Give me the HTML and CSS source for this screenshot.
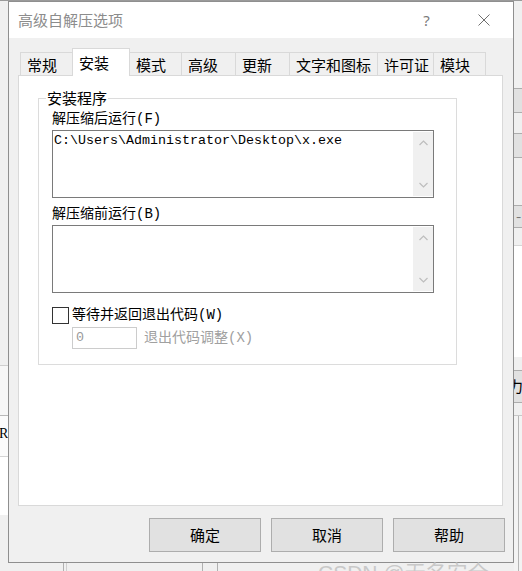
FILE: index.html
```html
<!DOCTYPE html>
<html lang="zh-CN">
<head>
<meta charset="utf-8">
<title>高级自解压选项</title>
<link rel="stylesheet" href="styles.css">
</head>
<body>
<div class="backdrop">
  <div class="bg-top"></div>
  <div class="bg-left">
    <div class="bl bl-a"></div>
    <div class="bl bl-b"><span class="frag">iR</span></div>
    <div class="bl bl-c"></div>
  </div>
  <div class="bg-right">
    <div class="br-block br-1"></div>
    <div class="br-block br-2"></div>
    <div class="br-block br-3">-</div>
    <div class="br-white br-4"></div>
    <div class="br-block br-5">力</div>
    <div class="br-white br-6"></div>
  </div>
  <div class="bg-bottom">
    <div class="bb-line bb-1"></div>
    <div class="bb-line bb-2"></div>
    <div class="bb-line bb-3"></div>
    <div class="bb-line bb-4"></div>
  </div>
</div>

<div class="dialog">
  <div class="titlebar">
    <span class="title">高级自解压选项</span>
    <span class="help">?</span>
    <svg class="close" width="12" height="12" viewBox="0 0 12 12"><path d="M0.5 0.5 L11.5 11.5 M11.5 0.5 L0.5 11.5" stroke="#6f6f6f" stroke-width="1" fill="none"/></svg>
  </div>
  <div class="body">
    <div class="tabs">
      <div class="tab w53 first">常规</div>
      <div class="tab w58 active">安装</div>
      <div class="tab w53">模式</div>
      <div class="tab w55">高级</div>
      <div class="tab w55">更新</div>
      <div class="tab w89">文字和图标</div>
      <div class="tab w57">许可证</div>
      <div class="tab w53 last">模块</div>
    </div>
    <div class="panel">
      <div class="group">
        <div class="group-title">安装程序</div>
        <div class="field-label first-label">解压缩后运行(F)</div>
        <div class="textbox">
          <div class="text">C:\Users\Administrator\Desktop\x.exe</div>
          <div class="scrollbar">
            <svg width="9" height="6" viewBox="0 0 9 6"><polyline points="0.5,5 4.5,1 8.5,5" fill="none" stroke="#bdbdbd" stroke-width="1.2"/></svg>
            <svg width="9" height="6" viewBox="0 0 9 6"><polyline points="0.5,1 4.5,5 8.5,1" fill="none" stroke="#bdbdbd" stroke-width="1.2"/></svg>
          </div>
        </div>
        <div class="field-label second-label">解压缩前运行(B)</div>
        <div class="textbox">
          <div class="text"></div>
          <div class="scrollbar">
            <svg width="9" height="6" viewBox="0 0 9 6"><polyline points="0.5,5 4.5,1 8.5,5" fill="none" stroke="#bdbdbd" stroke-width="1.2"/></svg>
            <svg width="9" height="6" viewBox="0 0 9 6"><polyline points="0.5,1 4.5,5 8.5,1" fill="none" stroke="#bdbdbd" stroke-width="1.2"/></svg>
          </div>
        </div>
        <div class="check-row">
          <span class="checkbox"></span>
          <span class="check-label">等待并返回退出代码(W)</span>
        </div>
        <div class="code-row">
          <div class="code-input">0</div>
          <span class="code-label">退出代码调整(X)</span>
        </div>
      </div>
    </div>
    <div class="buttons">
      <div class="btn">确定</div>
      <div class="btn">取消</div>
      <div class="btn">帮助</div>
    </div>
  </div>
</div>

<div class="watermark">CSDN @无名安全</div>
</body>
</html>
```

FILE: styles.css
```css
* { box-sizing: border-box; }
html, body { margin: 0; padding: 0; }
body {
  width: 522px;
  height: 571px;
  overflow: hidden;
  position: relative;
  background: #f0f0f0;
  font-family: "Noto Sans CJK SC", sans-serif;
  color: #000;
}

/* ---------- background application (behind the dialog) ---------- */
.backdrop { position: absolute; left: 0; top: 0; width: 522px; height: 571px; }
.bg-top { position: absolute; left: 0; top: 0; width: 522px; height: 1px; background: #9a9a9a; }
.bg-left { position: absolute; left: 0; top: 0; width: 8px; height: 571px; }
.bl { position: absolute; left: 0; width: 8px; }
.bl-a { top: 365px; height: 50px; border-top: 1px solid #cfcfcf; background: #f7f7f7; }
.bl-b { top: 415px; height: 42px; border-top: 1px solid #b9b9b9; border-bottom: 1px solid #d4d4d4; background: #fbfbfb; overflow: hidden; }
.bl-c { top: 457px; height: 58px; background: #fff; }
.frag { position: absolute; left: -5px; top: 10px; font-family: "Liberation Serif", serif; font-size: 14px; line-height: 16px; }
.bg-right { position: absolute; left: 514px; top: 0; width: 8px; height: 571px; }
.br-block, .br-white { position: absolute; left: 0; width: 8px; overflow: hidden; }
.br-block { background: #e1e1e1; border-top: 1px solid #adadad; border-bottom: 1px solid #adadad; font-size: 15px; line-height: 30px; text-indent: -6px; }
.br-1 { top: 88px; height: 25px; }
.br-2 { top: 133px; height: 25px; }
.br-3 { top: 205px; height: 23px; line-height: 20px; text-indent: 2px; color: #777; }
.br-4 { top: 245px; height: 112px; background: #fff; border-top: 1px solid #d6d6d6; }
.br-5 { top: 370px; height: 33px; }
.br-6 { top: 415px; height: 156px; background: #f3f3f3; border-top: 1px solid #c8c8c8; }
.br-6::after { content: ""; position: absolute; left: 4px; top: 0; width: 1px; height: 156px; background: #b5b5b5; }
.bg-bottom { position: absolute; left: 0; top: 563px; width: 522px; height: 8px; }
.bb-line { position: absolute; top: 0; width: 1px; height: 8px; background: #b0b0b0; }
.bb-1 { left: 63px; }
.bb-2 { left: 66px; background: #d0d0d0; }
.bb-3 { left: 202px; }
.bb-4 { left: 217px; }

.watermark {
  position: absolute;
  left: 318px;
  top: 561px;
  font-family: "Liberation Sans", "Noto Sans CJK SC", sans-serif;
  font-size: 21px;
  line-height: 24px;
  color: #c9c9c9;
  white-space: nowrap;
}

/* ---------- dialog window ---------- */
.dialog {
  position: absolute;
  left: 8px;
  top: 1px;
  width: 506px;
  height: 562px;
  border: 1px solid #8f8f8f;
  background: #f0f0f0;
  display: flex;
  flex-direction: column;
}

.titlebar {
  height: 36px;
  background: #fff;
  display: flex;
  align-items: center;
  padding-left: 9px;
  flex: none;
}
.title {
  flex: 1;
  font-size: 15px;
  line-height: 20px;
  color: #8c8c8c;
}
.help {
  width: 15px;
  text-align: center;
  font-family: "Noto Sans", sans-serif;
  font-size: 15px;
  line-height: 20px;
  color: #7a7a7a;
  margin-right: 44px;
}
.close { display: block; margin-right: 23px; }

.body {
  flex: 1;
  display: flex;
  flex-direction: column;
  padding-top: 10px;
}

/* ---------- tabs ---------- */
.tabs {
  display: flex;
  align-items: flex-end;
  height: 27px;
  margin-left: 11px;
  flex: none;
}
.tab {
  height: 23px;
  border: 1px solid #d9d9d9;
  border-bottom: none;
  margin-left: -1px;
  background: #f0f0f0;
  font-size: 15px;
  line-height: 22px;
  padding: 1px 0 0 6px;
  white-space: nowrap;
}
.tab.first { margin-left: 0; }
.tab.active {
  height: 28px;
  background: #fff;
  margin-bottom: -1px;
  padding-top: 3px;
  position: relative;
  z-index: 1;
}
.w53 { width: 53px; }
.w55 { width: 55px; }
.w57 { width: 57px; }
.w58 { width: 58px; }
.w89 { width: 89px; }

/* ---------- tab page ---------- */
.panel {
  margin-left: 9px;
  width: 485px;
  height: 431px;
  border: 1px solid #d9d9d9;
  background: #fff;
  flex: none;
  padding-top: 22px;
}
.group {
  margin-left: 19px;
  width: 419px;
  border: 1px solid #dcdcdc;
  padding: 0 13px 15px 13px;
}
.group-title {
  width: fit-content;
  margin: -9px 0 0 -6px;
  padding: 0 1px;
  background: #fff;
  font-size: 15px;
  line-height: 16px;
}
.field-label {
  font-family: "Liberation Mono", "Noto Sans CJK SC", monospace;
  font-size: 14px;
  line-height: 18px;
  margin-bottom: 2px;
  white-space: nowrap;
}
.first-label { margin-top: 4px; }
.second-label { margin-top: 7px; }

.textbox {
  width: 382px;
  height: 68px;
  border: 1px solid #7a7a7a;
  display: flex;
  background: #fff;
}
.text {
  flex: 1;
  padding: 2px 0 0 1px;
  font-family: "Liberation Mono", monospace;
  font-size: 13.33px;
  line-height: 16px;
  white-space: nowrap;
}
.scrollbar {
  width: 20px;
  margin: 1px 0;
  background: #f0f0f0;
  display: flex;
  flex-direction: column;
  align-items: center;
  justify-content: space-between;
  padding: 8px 0 8px;
}
.scrollbar svg { display: block; }

.check-row {
  display: flex;
  align-items: center;
  height: 18px;
  margin-top: 13px;
}
.checkbox {
  width: 17px;
  height: 17px;
  border: 1px solid #333;
  background: #fff;
  margin-right: 3px;
  flex: none;
}
.check-label, .code-label {
  font-family: "Liberation Mono", "Noto Sans CJK SC", monospace;
  font-size: 14px;
  line-height: 18px;
  white-space: nowrap;
}
.code-row {
  display: flex;
  align-items: center;
  margin-top: 3px;
  margin-left: 20px;
}
.code-input {
  width: 65px;
  height: 22px;
  border: 1px solid #cccccc;
  background: #fff;
  font-family: "Liberation Mono", monospace;
  font-size: 13.33px;
  line-height: 20px;
  padding-left: 3px;
  color: #9a9a9a;
  margin-right: 7px;
}
.code-label { color: #a0a0a0; }

/* ---------- buttons ---------- */
.buttons {
  display: flex;
  justify-content: flex-end;
  gap: 10px;
  margin-top: 12px;
  margin-right: 8px;
  flex: none;
}
.btn {
  width: 112px;
  height: 34px;
  border: 1px solid #adadad;
  background: #e1e1e1;
  font-size: 15px;
  line-height: 32px;
  text-align: center;
}
```
